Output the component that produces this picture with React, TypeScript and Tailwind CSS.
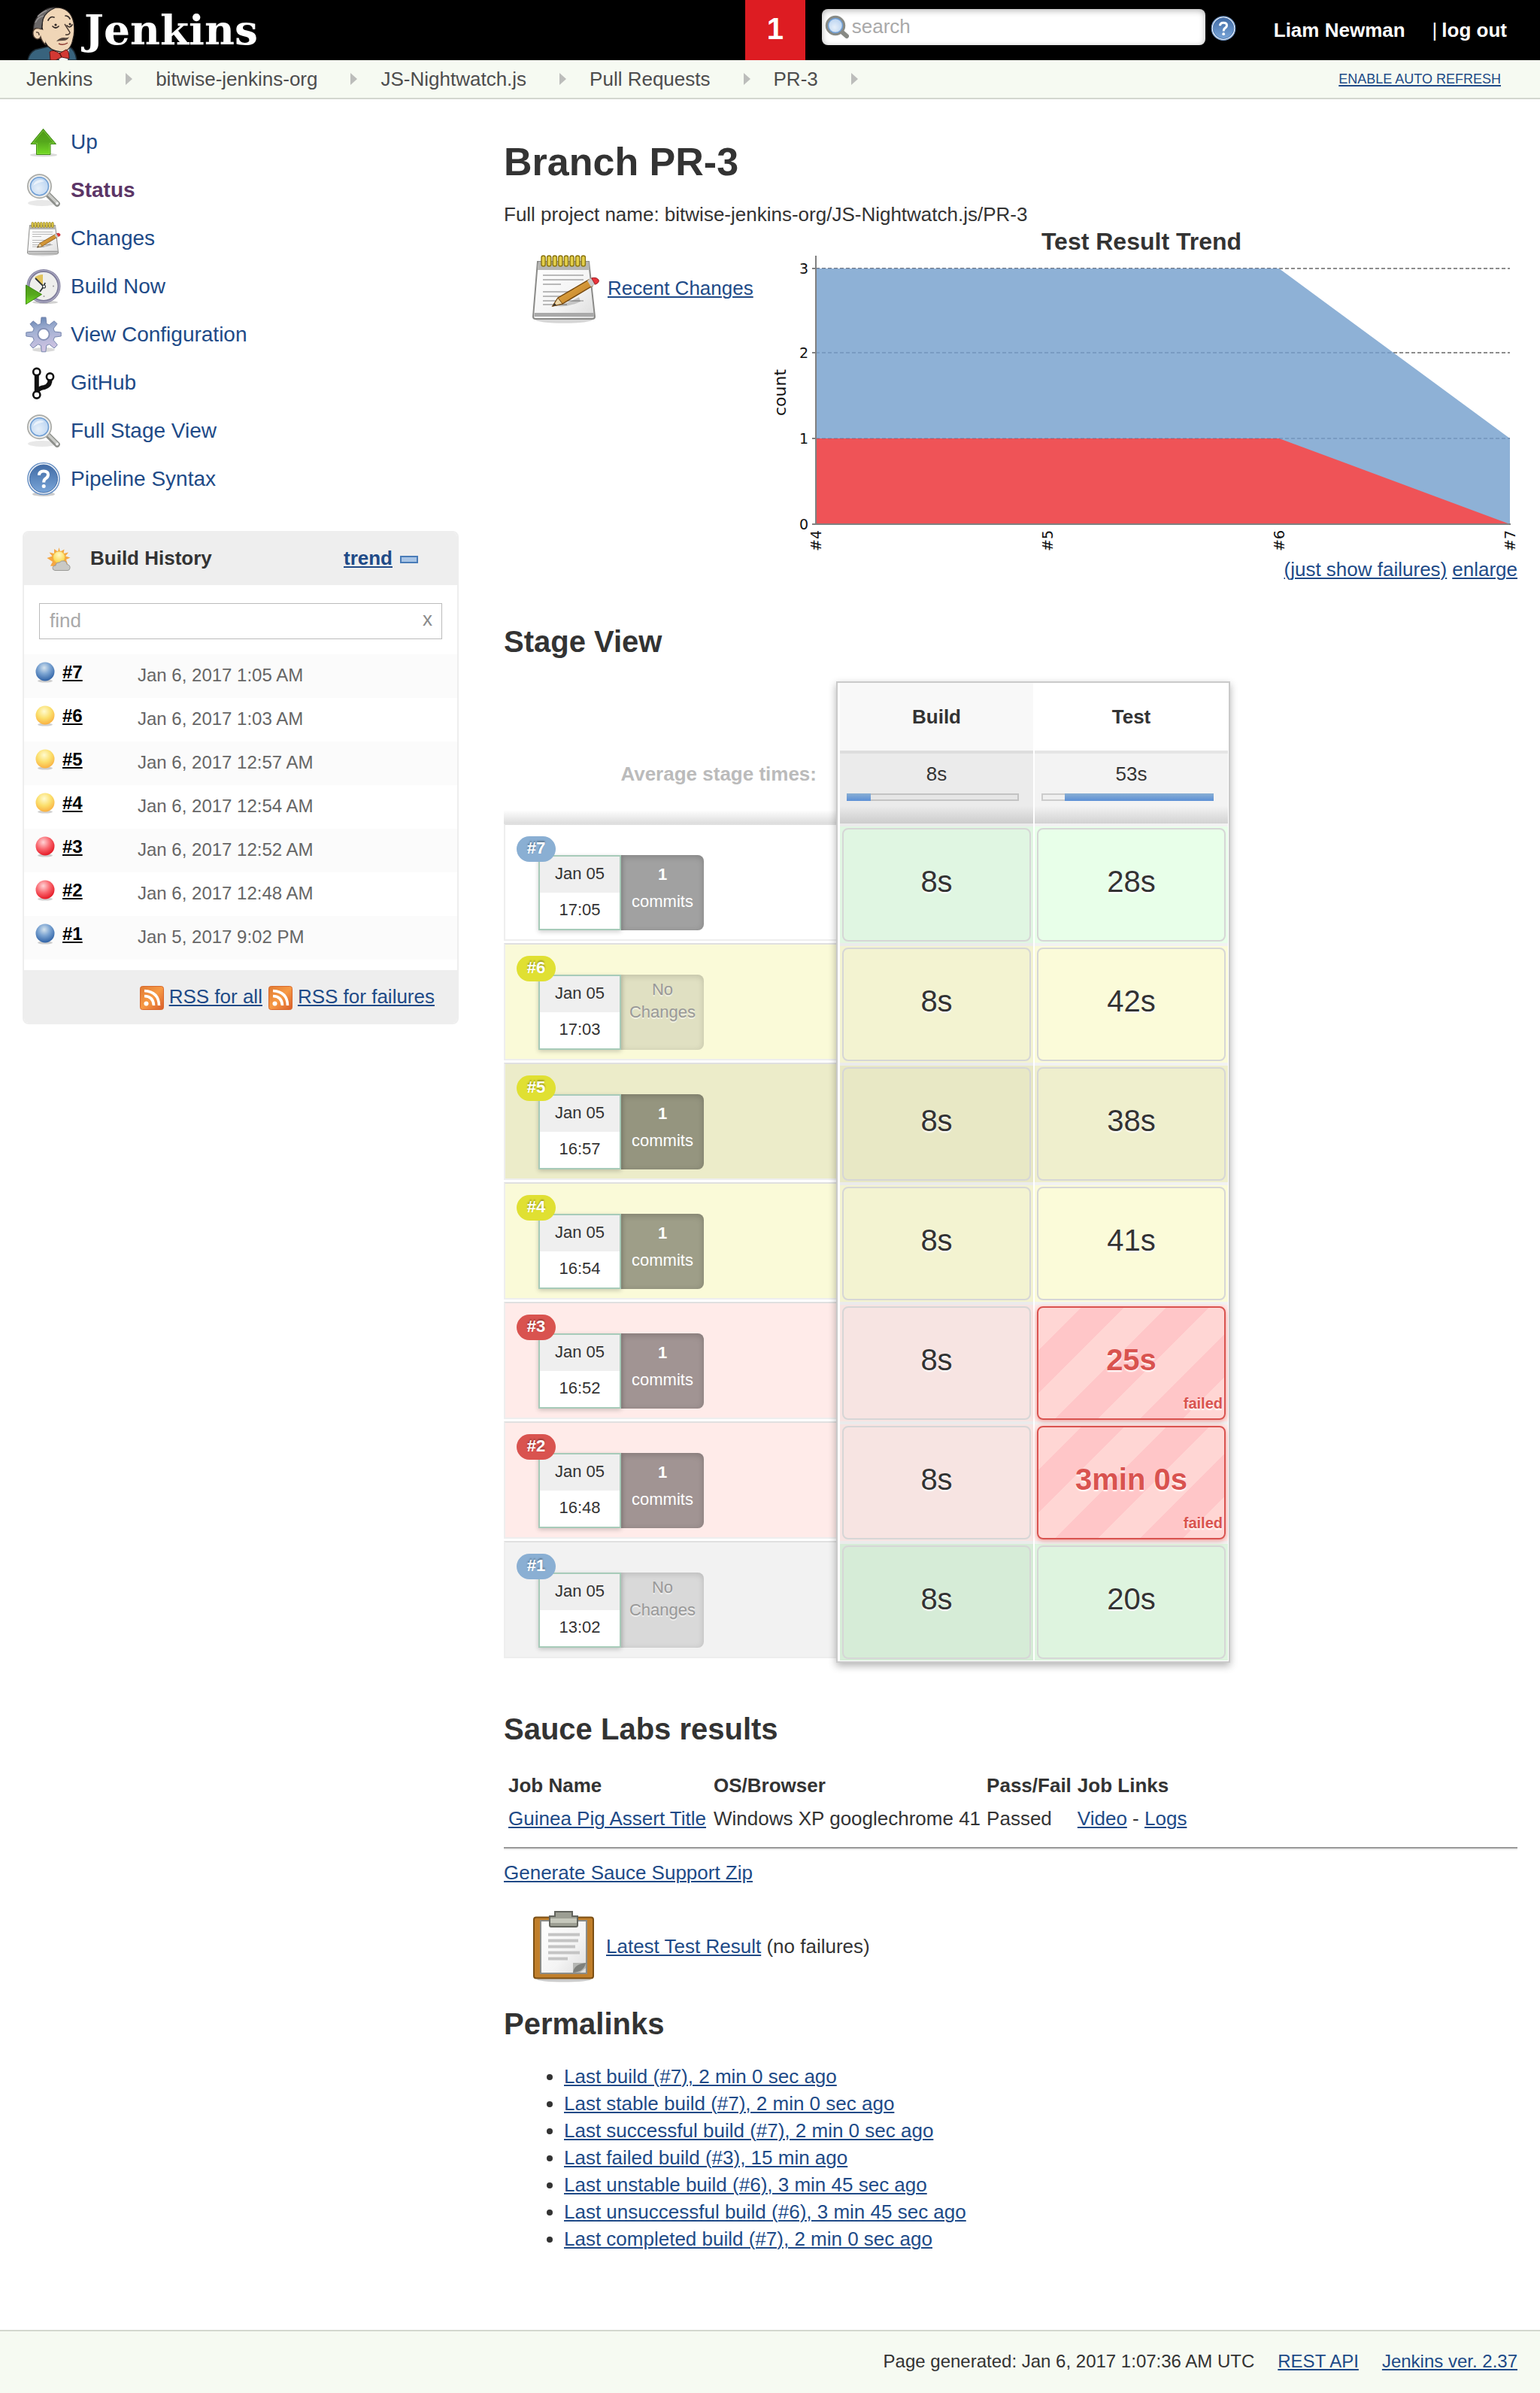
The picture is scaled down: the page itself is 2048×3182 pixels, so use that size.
import type { ReactNode } from "react";

const link = "text-[#204a87] underline decoration-2 underline-offset-2";

/* ---------- shared gradients ---------- */

function Gradients() {
  return (
    <svg className="absolute h-0 w-0" aria-hidden="true">
      <defs>
        <linearGradient id="green" x1="0" y1="0" x2="0" y2="1">
          <stop offset="0" stopColor="#4e9a16" />
          <stop offset="0.5" stopColor="#55a81c" />
          <stop offset="1" stopColor="#75dc25" />
        </linearGradient>
        <radialGradient id="lens" cx="0.45" cy="0.6" r="0.6">
          <stop offset="0" stopColor="#e6eff9" />
          <stop offset="1" stopColor="#b4d0f0" />
        </radialGradient>
        <linearGradient id="paper" x1="0" y1="0" x2="1" y2="1">
          <stop offset="0" stopColor="#ffffff" />
          <stop offset="0.6" stopColor="#f4f4f4" />
          <stop offset="1" stopColor="#dcdcdc" />
        </linearGradient>
        <linearGradient id="gear" x1="0" y1="0" x2="0.2" y2="1">
          <stop offset="0" stopColor="#5f7fae" />
          <stop offset="0.45" stopColor="#a3b1d3" />
          <stop offset="1" stopColor="#cfc3e2" />
        </linearGradient>
        <linearGradient id="help" x1="0" y1="0" x2="0" y2="1">
          <stop offset="0" stopColor="#416ba5" />
          <stop offset="1" stopColor="#79a5d8" />
        </linearGradient>
        <linearGradient id="rss" x1="0" y1="0" x2="1" y2="1">
          <stop offset="0" stopColor="#e07a32" />
          <stop offset="0.5" stopColor="#f79a45" />
          <stop offset="1" stopColor="#d85c2b" />
        </linearGradient>
        <radialGradient id="sun" cx="0.5" cy="0.3" r="0.7">
          <stop offset="0" stopColor="#fff9c4" />
          <stop offset="1" stopColor="#fbd23c" />
        </radialGradient>
        <radialGradient id="ball-blue" cx="0.45" cy="0.3" r="0.7">
          <stop offset="0" stopColor="#d6e4ee" />
          <stop offset="0.45" stopColor="#7ea6d3" />
          <stop offset="1" stopColor="#2f62a6" />
        </radialGradient>
        <radialGradient id="ball-yellow" cx="0.45" cy="0.3" r="0.75">
          <stop offset="0" stopColor="#fffbd0" />
          <stop offset="0.5" stopColor="#fbdf6c" />
          <stop offset="1" stopColor="#f9a93a" />
        </radialGradient>
        <radialGradient id="ball-red" cx="0.4" cy="0.3" r="0.75">
          <stop offset="0" stopColor="#ffd3d6" />
          <stop offset="0.5" stopColor="#f9656d" />
          <stop offset="1" stopColor="#e2101c" />
        </radialGradient>
        <linearGradient id="pencil" x1="0" y1="0" x2="1" y2="1">
          <stop offset="0" stopColor="#edb64c" />
          <stop offset="1" stopColor="#b97622" />
        </linearGradient>
      </defs>
    </svg>
  );
}

/* ---------- icons ---------- */

function Butler() {
  return (
    <svg viewBox="0 0 68 72" className="h-[72px] w-[68px] shrink-0" aria-hidden="true">
      <path d="M1 72 Q3 62 11 58 L28 54 L56 54 Q64 58 66 72Z" fill="#38637d" stroke="#1d2b35" strokeWidth="1.5" />
      <path d="M37 54 L43 72 L54 72 L56 56Z" fill="#f4f4f4" />
      <path d="M20 28 Q20 4 38 2 Q58 2 62 22 Q64 34 61 44 Q58 60 46 61 Q30 60 24 48Z" fill="#f0d6b7" stroke="#2a2320" strokeWidth="1.2" />
      <path d="M9 38 Q6 18 20 8 Q28 1 38 2 Q24 8 21 18 L19 31 L13 33Z" fill="#6b6868" stroke="#2b2828" strokeWidth="1.2" />
      <path d="M14 14 Q20 8 26 6 M11 22 Q14 15 22 13" fill="none" stroke="#9a9797" strokeWidth="1.5" />
      <path d="M19 31 Q10 27 8 34 Q7 42 13 44 Q18 44 18 42 Q20 48 24 50 L26 34Z" fill="#f0d6b7" />
      <path d="M19 31 Q10 27 8 34 Q7 42 13 44 Q17 44 18 41 Q20 48 25 52 M12 35 Q16 34 16 39" fill="none" stroke="#4a3a30" strokeWidth="1.3" />
      <path d="M28 19 Q31 13 36 15 M51 13 Q55 13 57 17 M34 27 Q38 31 42 27 M53 26 Q57 30 60 25" fill="none" stroke="#302724" strokeWidth="1.7" strokeLinecap="round" />
      <circle cx="38" cy="25" r="1.6" fill="#302724" />
      <circle cx="57" cy="24" r="1.5" fill="#302724" />
      <path d="M50 24 L57 35 Q56 39 51 38" fill="none" stroke="#4a3a30" strokeWidth="1.4" />
      <path d="M39 47 Q43 42 49 42 Q54 43 56 41 Q54 46 48 46 Q43 46 39 47Z" fill="#55473f" />
      <path d="M42 50 Q48 53 54 49" fill="none" stroke="#8d3b33" strokeWidth="1.4" />
      <path d="M30 61 Q34 57 43 63 L52 58 Q56 59 56 70 L46 68 L38 72 L31 72Z" fill="#d33833" stroke="#5b1513" strokeWidth="1" />
      <path d="M43 62 L46 68" stroke="#5b1513" strokeWidth="1.5" />
    </svg>
  );
}

function ArrowUp() {
  return (
    <svg viewBox="0 0 48 48" className="size-12 shrink-0" aria-hidden="true">
      <ellipse cx="24" cy="41" rx="18" ry="2.5" fill="#000" opacity="0.14" />
      <path d="M23.5 6.5 L40.5 26.5 H33 V40.5 H14.5 V26.5 H7Z" fill="url(#green)" stroke="#3f8a12" strokeWidth="1" strokeLinejoin="round" />
      <path d="M23.5 8.5 L38 25.5 H32 V39.5 H15.5 V25.5 H9.5Z" fill="none" stroke="#9be05a" strokeWidth="0.8" opacity="0.7" />
    </svg>
  );
}

function Magnifier() {
  return (
    <svg viewBox="0 0 48 48" className="size-12 shrink-0" aria-hidden="true">
      <ellipse cx="22" cy="41" rx="19" ry="4" fill="#000" opacity="0.09" />
      <path d="M29 29 L42 42" stroke="#8c8e8a" strokeWidth="7.5" strokeLinecap="round" />
      <path d="M30 29 L42 41" stroke="#c9cac7" strokeWidth="3.5" strokeLinecap="round" />
      <circle cx="42" cy="41.5" r="2" fill="#eee" />
      <circle cx="18.5" cy="18.7" r="15" fill="url(#lens)" stroke="#a9aaa6" strokeWidth="3" />
      <circle cx="18.5" cy="18.7" r="13.6" fill="none" stroke="#eeeeec" strokeWidth="2.4" />
      <circle cx="18.5" cy="18.7" r="12" fill="none" stroke="#6f9ed4" strokeWidth="1.6" />
      <path d="M10 18 Q12 11 19 10 Q23 10 25 12 Q15 14 10 18Z" fill="#fff" opacity="0.6" />
    </svg>
  );
}

function Notepad({ className = "size-12" }: { className?: string }) {
  return (
    <svg viewBox="0 0 48 48" className={`${className} shrink-0`} aria-hidden="true">
      <ellipse cx="23" cy="45" rx="19" ry="2.4" fill="#000" opacity="0.16" />
      <path d="M5.5 6.5 H39.5 L43.5 43 Q43.5 44.5 42 44.5 H4 Q2.5 44.5 2.5 43Z" fill="url(#paper)" stroke="#8a8a88" strokeWidth="1" />
      <path d="M6 6.5 H39.5 L40 12 H5.5Z" fill="#b6b6b3" />
      <path d="M3.4 40.5 H42.8 L43 43 H3.2Z" fill="#a9a9a9" />
      <path d="M9 15.5 H36 M9 18.5 H36 M9 21.5 H21 M9 26.5 H30 M9 29.5 H27 M9 32.5 H36 M9 35 H25" stroke="#b9b9b9" strokeWidth="1.1" />
      {[8, 11.8, 15.6, 19.4, 23.2, 27, 30.8, 34.6].map((x) => (
        <rect key={x} x={x} y="2.5" width="2.6" height="7" rx="1.3" fill="#e3cf4a" stroke="#8a7410" strokeWidth="0.7" />
      ))}
      <path d="M17 36 Q26 34 33 30 L34 33 Q26 37 17 36Z" fill="#000" opacity="0.18" />
      <path d="M15.5 36 L19 30.5 L39.5 18.5 L42 22.5 L22 34.5Z" fill="url(#pencil)" stroke="#75480f" strokeWidth="0.7" />
      <path d="M15.5 36 L19 30.5 L22 34.5Z" fill="#ecd6a8" stroke="#75480f" strokeWidth="0.5" />
      <path d="M15.5 36 L16.8 34 L18 35.4Z" fill="#333" />
      <path d="M38.5 19 L41.3 17.4 L43.7 21.6 L41 23.2Z" fill="#c9c9c9" />
      <path d="M41.3 17.4 Q44.5 16.5 46 18.5 Q46.8 20.5 43.7 21.6Z" fill="#e8333b" stroke="#9b2226" strokeWidth="0.5" />
    </svg>
  );
}

function ClockPlay() {
  return (
    <svg viewBox="0 0 48 48" className="size-12 shrink-0" aria-hidden="true">
      <ellipse cx="26" cy="45" rx="17" ry="2.2" fill="#000" opacity="0.18" />
      <circle cx="24" cy="23.5" r="20.5" fill="#efefed" stroke="#807e9c" strokeWidth="4" />
      <circle cx="24" cy="23.5" r="21" fill="none" stroke="#b3b1c9" strokeWidth="1.2" />
      <path d="M23 23 L12 12 Q17 8 23 8Z" fill="#e1c35c" />
      <path d="M13 13 L24 24 L26 19 M24 24 L19 31" fill="none" stroke="#2e3436" strokeWidth="1.8" />
      <circle cx="24.5" cy="24" r="2" fill="#fff" stroke="#2e3436" strokeWidth="1.1" />
      <circle cx="37" cy="23.5" r="1" fill="#999" />
      <circle cx="24.5" cy="37" r="1" fill="#999" />
      <path d="M0.5 22 L21.5 34.5 L0.5 47.5Z" fill="url(#green)" stroke="#3f8a12" strokeWidth="1" />
    </svg>
  );
}

function Gear() {
  return (
    <svg viewBox="0 0 48 48" className="size-12 shrink-0" aria-hidden="true">
      <ellipse cx="24" cy="44" rx="15" ry="3" fill="#000" opacity="0.15" />
      <mask id="gear-hole">
        <rect width="48" height="48" fill="#fff" />
        <circle cx="24" cy="23.5" r="6.5" fill="#000" />
      </mask>
      <g mask="url(#gear-hole)">
        <path
          d="M21 1 H27 L27.8 9.5 L31.5 11 L38 5.8 L42 9.5 L37 16 L38.6 20 L47.2 21 V26 L38.6 27.2 L37 31.2 L42.4 37.6 L38 42 L31.6 36.8 L27.8 38.4 L26.8 46.8 H21.4 L20.4 38.4 L16.6 36.8 L10 42 L6 37.8 L11.2 31.2 L9.6 27.2 L0.8 26 V21 L9.6 20 L11.2 16 L6 9.8 L10 5.8 L16.6 11 L20.2 9.5Z"
          fill="url(#gear)"
          stroke="#7585ad"
          strokeWidth="1"
          strokeLinejoin="round"
        />
        <circle cx="24" cy="23.5" r="7.6" fill="none" stroke="#8490b4" strokeWidth="1.6" />
      </g>
    </svg>
  );
}

function GitFork() {
  return (
    <svg viewBox="0 0 48 48" className="size-12 shrink-0" aria-hidden="true">
      <path d="M14.8 14 V36" stroke="#111" strokeWidth="6" />
      <path d="M32.5 20 Q32.5 28 25 30 Q18 31 15.5 35" fill="none" stroke="#111" strokeWidth="6" />
      <circle cx="14.8" cy="9.5" r="4.6" fill="#fff" stroke="#111" strokeWidth="2.6" />
      <circle cx="32.5" cy="16" r="4.6" fill="#fff" stroke="#111" strokeWidth="2.6" />
      <circle cx="14.8" cy="40" r="4.6" fill="#fff" stroke="#111" strokeWidth="2.6" />
    </svg>
  );
}

function Help({ className = "size-12" }: { className?: string }) {
  return (
    <svg viewBox="0 0 48 48" className={`${className} shrink-0`} aria-hidden="true">
      <ellipse cx="24" cy="44" rx="15" ry="3" fill="#000" opacity="0.2" />
      <circle cx="24" cy="23.5" r="21" fill="#fff" stroke="#6d94c6" strokeWidth="1.6" />
      <circle cx="24" cy="23.5" r="18.5" fill="url(#help)" stroke="#3c69a6" strokeWidth="1" />
      <path d="M18 19 Q18 13.5 24 13.5 Q30 13.5 30 18 Q30 21.5 26.5 23.5 Q24.2 25 24.2 28.5" fill="none" stroke="#fff" strokeWidth="4" />
      <circle cx="24.2" cy="33.5" r="2.5" fill="#fff" />
    </svg>
  );
}

function Weather() {
  return (
    <svg viewBox="0 0 32 32" className="size-8 shrink-0" aria-hidden="true">
      <path
        d="M16.5 0 L18 5.5 L23.5 2.5 L22.5 8 L29 6.5 L25 11.5 L31.5 13.5 L26 16 L28 22 L20 20 L10 25 L5 24.5 L8 19 L0.5 14 L7.5 11.5 L3.5 6.5 L10 8 L10 2 L15 5.5Z"
        fill="#f5a742"
      />
      <circle cx="16.5" cy="13" r="8" fill="url(#sun)" stroke="#f0b43a" strokeWidth="0.8" />
      <path d="M11 30.5 Q7.5 30 8 26.5 Q9 23.5 12 24 Q12.5 19.5 17 20 Q19.5 17 23.5 18 Q27 19 27 22.5 Q31.5 23 31 27.5 Q30.5 30.5 28 30.5Z" fill="#c9c9c6" stroke="#9a9a97" strokeWidth="1" />
    </svg>
  );
}

function Rss() {
  return (
    <svg viewBox="0 0 32 32" className="size-8 shrink-0" aria-hidden="true">
      <rect x="0.5" y="0.5" width="31" height="31" rx="3" fill="url(#rss)" stroke="#d9692c" />
      <circle cx="8.5" cy="23.5" r="3" fill="#fff" />
      <path d="M6 13.5 Q18 14 18.5 26 M6 6.5 Q25 7.5 25.5 26" fill="none" stroke="#fff" strokeWidth="3.6" />
    </svg>
  );
}

function Ball({ fill }: { fill: string }) {
  return (
    <svg viewBox="0 0 26 28" className="h-7 w-[26px] shrink-0" aria-hidden="true">
      <ellipse cx="13" cy="25.5" rx="10" ry="2" fill="#000" opacity="0.18" />
      <circle cx="13" cy="13" r="12.5" fill={fill} />
    </svg>
  );
}

function Clipboard() {
  return (
    <svg viewBox="0 0 96 96" className="size-24 shrink-0" aria-hidden="true">
      <ellipse cx="48" cy="92" rx="36" ry="3.5" fill="#000" opacity="0.2" />
      <rect x="8" y="9.5" width="79" height="81" rx="3" fill="#c17f2b" stroke="#7c4f13" strokeWidth="2" />
      <path d="M17 14 H78 V84 H17Z" fill="url(#paper)" stroke="#8b8c88" strokeWidth="2" />
      <path d="M27 32.5 H69 M27 40.5 H67 M27 48.5 H63 M27 56.5 H69 M27 64.5 H53" stroke="#c4c4c4" strokeWidth="4" />
      <path d="M60 83 V70 H77 V77 L69 83Z" fill="#b5b6b3" />
      <path d="M60 83 Q61 72 77 70 Q75 82 60 83Z" fill="#7e807c" />
      <path d="M36 2 H59 V8 H66 V20 Q66 22 64 22 H31 Q29 22 29 20 V8 H36Z" fill="#9c9e93" stroke="#62645d" strokeWidth="2" />
      <path d="M30 11 H65 V17 H30Z" fill="#c6c8bc" />
    </svg>
  );
}

/* ---------- header ---------- */

function Header() {
  return (
    <header className="flex h-20 items-center bg-black pr-11 text-[26px] leading-8 font-bold text-white">
      <a href="#home" className="flex items-center self-end pl-9">
        <Butler />
        <span className="pb-2 pl-2 font-['DejaVu_Serif',serif] text-[55px] leading-[64px]">Jenkins</span>
      </a>
      <div className="ml-auto flex items-center">
        <button type="button" className="flex size-20 items-center justify-center bg-[#dd1c22] pb-1 text-[40px]">
          1
        </button>
        <label className="mb-2 ml-[22px] flex h-12 w-[510px] items-center rounded-lg bg-white px-1 shadow-[inset_0_2px_8px_rgba(0,0,0,0.3)]">
          <svg viewBox="0 0 32 32" className="size-8 shrink-0" aria-hidden="true">
            <path d="M21 21 L29 28" stroke="#888a85" strokeWidth="6" strokeLinecap="round" />
            <circle cx="14" cy="14" r="11.5" fill="url(#lens)" stroke="#888a85" strokeWidth="3.5" />
            <circle cx="14" cy="14" r="9.5" fill="none" stroke="#6f9ed4" strokeWidth="1.5" />
          </svg>
          <span className="sr-only">Search</span>
          <input type="text" placeholder="search" className="h-10 min-w-0 flex-1 bg-transparent pb-0.5 pl-1 font-normal text-black outline-none placeholder:text-[#a9a9a9]" />
        </label>
        <a href="#help" aria-label="Help" className="mb-1 ml-1.5">
          <Help className="size-9" />
        </a>
        <a href="#user" className="ml-[49px]">
          Liam Newman
        </a>
        <span className="ml-9 font-normal">|</span>
        <a href="#logout" className="ml-1.5">
          log out
        </a>
      </div>
    </header>
  );
}

const crumbs = ["Jenkins", "bitwise-jenkins-org", "JS-Nightwatch.js", "Pull Requests", "PR-3"];

function Breadcrumbs() {
  return (
    <nav aria-label="Breadcrumb" className="flex h-[52px] items-center border-b-2 border-[#d3d7cf] bg-[#f6faf2] pr-[52px] pl-[35px] text-[26px] leading-8">
      {crumbs.map((c) => (
        <span key={c} className="flex items-center">
          <a href="#crumb" className="text-[#4d4d4d]">
            {c}
          </a>
          <svg viewBox="0 0 9 16" className="mr-[31px] ml-11 h-4 w-[9px]" aria-hidden="true">
            <path d="M0 0 L9 8 L0 16Z" fill="#bcbdbb" />
          </svg>
        </span>
      ))}
      <a href="#refresh" className="ml-auto text-[18px] text-[#204a87] underline decoration-2 underline-offset-2">
        ENABLE AUTO REFRESH
      </a>
    </nav>
  );
}

/* ---------- side panel ---------- */

const tasks: { label: string; icon: ReactNode; current?: boolean }[] = [
  { label: "Up", icon: <ArrowUp /> },
  { label: "Status", icon: <Magnifier />, current: true },
  { label: "Changes", icon: <Notepad /> },
  { label: "Build Now", icon: <ClockPlay /> },
  { label: "View Configuration", icon: <Gear /> },
  { label: "GitHub", icon: <GitFork /> },
  { label: "Full Stage View", icon: <Magnifier /> },
  { label: "Pipeline Syntax", icon: <Help /> },
];

const history = [
  { id: "#7", date: "Jan 6, 2017 1:05 AM", ball: "url(#ball-blue)" },
  { id: "#6", date: "Jan 6, 2017 1:03 AM", ball: "url(#ball-yellow)" },
  { id: "#5", date: "Jan 6, 2017 12:57 AM", ball: "url(#ball-yellow)" },
  { id: "#4", date: "Jan 6, 2017 12:54 AM", ball: "url(#ball-yellow)" },
  { id: "#3", date: "Jan 6, 2017 12:52 AM", ball: "url(#ball-red)" },
  { id: "#2", date: "Jan 6, 2017 12:48 AM", ball: "url(#ball-red)" },
  { id: "#1", date: "Jan 5, 2017 9:02 PM", ball: "url(#ball-blue)" },
];

function SidePanel() {
  return (
    <aside className="ml-[30px] w-[580px] shrink-0 pt-[25px]">
      <ul>
        {tasks.map((t) => (
          <li key={t.label} className="flex h-16 items-center gap-3 pl-1 text-[28px] leading-8">
            {t.icon}
            <a href="#task" className={t.current ? "font-bold text-[#5c3566]" : "text-[#204a87]"}>
              {t.label}
            </a>
          </li>
        ))}
      </ul>

      <section className="mt-[37px] overflow-hidden rounded-lg border-2 border-[#eeeeee] text-[26px] leading-8">
        <div className="flex h-[70px] items-center bg-[#eeeeee] pr-[52px] pb-0.5 pl-[30px] font-bold">
          <span className="pt-1">
            <Weather />
          </span>
          <h2 className="ml-[26px]">Build History</h2>
          <a href="#trend" className={`ml-auto ${link}`}>
            trend
          </a>
          <button type="button" aria-label="Collapse" className="mt-1 ml-2.5 h-2.5 w-6 border-2 border-[#4a7cb8] bg-[#a9c5e6]" />
        </div>
        <label className="mx-5 mt-6 flex h-12 items-center border border-[#bbbbbb] pr-3 pl-[13px]">
          <span className="sr-only">Find builds</span>
          <input type="text" placeholder="find" className="h-10 min-w-0 flex-1 pb-0.5 outline-none placeholder:text-[#a9a9a9]" />
          <button type="button" aria-label="Clear" className="pb-1.5 text-[#8a8a8a]">
            x
          </button>
        </label>
        <table className="mt-5 w-full border-collapse text-[24px] leading-8">
          <tbody>
            {history.map((b) => (
              <tr key={b.id} className="h-[58px] odd:bg-[#fbfbfb]">
                <td className="w-[151px] pb-2.5 pl-[15px]">
                  <span className="flex items-center gap-2.5">
                    <Ball fill={b.ball} />
                    <a href="#build" className="font-bold text-black underline decoration-2 underline-offset-2">
                      {b.id}
                    </a>
                  </span>
                </td>
                <td className="pb-0.5 text-[#666666]">
                  <a href="#build">{b.date}</a>
                </td>
              </tr>
            ))}
          </tbody>
        </table>
        <div className="mt-3.5 flex h-[70px] items-center justify-end bg-[#eeeeee] pr-[30px]">
          <span className="pt-1">
            <Rss />
          </span>
          <a href="#rss-all" className={`ml-[7px] ${link}`}>
            RSS for all
          </a>
          <span className="pt-1 pl-2">
            <Rss />
          </span>
          <a href="#rss-failures" className={`ml-[7px] ${link}`}>
            RSS for failures
          </a>
        </div>
      </section>
    </aside>
  );
}

/* ---------- test trend ---------- */

function TrendChart() {
  const xs = [67, 375, 683, 990];
  const ys = [358, 244, 130, 18];
  return (
    <svg viewBox="0 0 1000 400" className="block h-[400px] w-full font-['DejaVu_Sans',sans-serif] text-[19px]" role="img" aria-label="Test Result Trend">
      {ys.slice(1).map((y) => (
        <path key={y} d={`M67 ${y} H990`} stroke="#8c8c8c" strokeWidth="2" strokeDasharray="5 3" />
      ))}
      <path d="M67 18 H683 L990 244 V358 H67Z" fill="#8eb1d6" />
      <path d="M67 244 H683 L990 358 H67Z" fill="#ef5357" />
      {ys.slice(1).map((y) => (
        <path key={y} d={`M67 ${y} H${y === 18 ? 683 : y === 130 ? 836 : 990}`} stroke="#305080" strokeWidth="2" strokeDasharray="5 3" opacity="0.22" />
      ))}
      <path d="M67 1 V358 M62 358 H991 M62 244 H67 M62 130 H67 M62 18 H67" stroke="#808080" strokeWidth="2" fill="none" />
      {ys.map((y, i) => (
        <text key={y} x="57" y={y + 7} textAnchor="end" fill="#111">
          {i}
        </text>
      ))}
      {xs.map((x, i) => (
        <text key={x} transform={`translate(${x + 7} 366) rotate(-90)`} textAnchor="end" fill="#111">
          {`#${i + 4}`}
        </text>
      ))}
      <text transform="translate(27 183) rotate(-90)" textAnchor="middle" className="text-[22px]" fill="#111">
        count
      </text>
    </svg>
  );
}

/* ---------- stage view ---------- */

type Tone = { row: string; build: string; test: string };

const tones: Record<string, Tone> = {
  white: { row: "bg-white", build: "bg-[#e0f6e2]", test: "bg-[#e8ffe9]" },
  yellow: { row: "bg-[#fafad8]", build: "bg-[#f3f3d1]", test: "bg-[#fbfbd9]" },
  olive: { row: "bg-[#ececc9]", build: "bg-[#e8e8c5]", test: "bg-[#efefcd]" },
  red: { row: "bg-[#ffebe9]", build: "bg-[#f7e4e2]", test: "bg-[#ffebe9]" },
  gray: { row: "bg-[#f2f2f2]", build: "bg-[#d6ecd7]", test: "bg-[#def4df]" },
};

const badges = { blue: "bg-[#8aafd3]", yellow: "bg-[#e0e032]", red: "bg-[#d9534f]" };

const runs: { id: string; time: string; commits: boolean; tone: string; badge: keyof typeof badges; test: string; failed?: boolean }[] = [
  { id: "#7", time: "17:05", commits: true, tone: "white", badge: "blue", test: "28s" },
  { id: "#6", time: "17:03", commits: false, tone: "yellow", badge: "yellow", test: "42s" },
  { id: "#5", time: "16:57", commits: true, tone: "olive", badge: "yellow", test: "38s" },
  { id: "#4", time: "16:54", commits: true, tone: "yellow", badge: "yellow", test: "41s" },
  { id: "#3", time: "16:52", commits: true, tone: "red", badge: "red", test: "25s", failed: true },
  { id: "#2", time: "16:48", commits: true, tone: "red", badge: "red", test: "3min 0s", failed: true },
  { id: "#1", time: "13:02", commits: false, tone: "gray", badge: "blue", test: "20s" },
];

function StageCell({ text, bg, sep, failed }: { text: string; bg: string; sep: string; failed?: boolean }) {
  return (
    <div className={`border-t-4 px-[3px] py-0.5 ${bg} ${sep}`}>
      {failed ? (
        <div className="relative flex h-[151px] items-center justify-center rounded-lg border-2 border-[#d9534f] bg-[repeating-linear-gradient(135deg,#ffd6d4_0px,#ffd6d4_40px,#ffc6c8_40px,#ffc6c8_80px)] text-[40px] leading-[48px] font-bold text-[#d9534f] shadow-[0_2px_6px_rgba(217,83,79,0.5)] text-shadow-[0_2px_2px_#ffffff]">
          <span className="pb-2.5">{text}</span>
          <span className="absolute right-0.5 bottom-1.5 text-[20px] leading-7">failed</span>
        </div>
      ) : (
        <div className="flex h-[151px] items-center justify-center rounded-lg border-2 border-[#d6d6d6] text-[40px] leading-[48px] text-shadow-[0_2px_2px_#ffffff]">
          <span className="pb-2.5">{text}</span>
        </div>
      )}
    </div>
  );
}

function StageView() {
  return (
    <div className="relative mt-[29px] w-[966px] pt-0.5 pb-[3px]">
      <table className="w-full table-fixed border-collapse">
        <colgroup>
          <col className="w-[444px]" />
          <col className="w-[260px]" />
          <col className="w-[262px]" />
        </colgroup>
        <thead className="text-[26px] leading-8">
          <tr>
            <td />
            <th scope="col" className="p-0 pl-[3px]">
              <div className="flex h-[94px] items-center justify-center border-b-4 border-[#dddddd] bg-[#f8f8f8]">Build</div>
            </th>
            <th scope="col" className="p-0 pr-[3px] pl-0.5">
              <div className="flex h-[94px] items-center justify-center border-b-4 border-[#e5e5e5]">Test</div>
            </th>
          </tr>
          <tr>
            <th scope="row" className="p-0">
              <div className="mr-0.5 flex h-[93px] flex-col justify-between pt-[11px] text-right text-[#bbbbbb]">
                <span className="pr-[26px]">Average stage times:</span>
                <span className="h-[18px] bg-linear-to-b from-white to-[#dddddd]" />
              </div>
            </th>
            <td className="p-0 pl-[3px]">
              <div className="flex h-[93px] flex-col bg-[linear-gradient(#ebebeb_75%,#cccccc)] pt-[11px]">
                <span className="text-center">8s</span>
                <span className="mt-2.5 mr-[19px] ml-[9px] flex h-2.5 border-2 border-black/15 bg-[#e6e6e6]">
                  <span className="-m-0.5 w-8 bg-linear-to-b from-[#8aafd3] to-[#5b8fd6]" />
                </span>
              </div>
            </td>
            <td className="p-0 pr-[3px] pl-0.5">
              <div className="flex h-[93px] flex-col bg-[linear-gradient(#f3f3f3_75%,#d2d2d2)] pt-[11px]">
                <span className="text-center">53s</span>
                <span className="mt-2.5 mr-[19px] ml-[9px] flex h-2.5 justify-end border-2 border-black/15 bg-[#f0f0f0]">
                  <span className="-m-0.5 w-[198px] bg-linear-to-b from-[#8aafd3] to-[#5b8fd6]" />
                </span>
              </div>
            </td>
          </tr>
        </thead>
        <tbody>
          {runs.map((r) => {
            const tone = tones[r.tone];
            return (
              <tr key={r.id}>
                <th scope="row" className="p-0 pb-[3px] text-left font-normal">
                  <div className={`relative mr-0.5 h-[156px] border-2 border-r-0 border-[#eeeeee] border-t-[#e0e0e0] pt-10 pl-11 ${tone.row}`}>
                    <div className="flex h-[100px] w-[220px] text-center text-[22px]">
                      <div className="w-[110px] border-2 border-[#a7cbb9] bg-white leading-[46px] shadow-[0_2px_6px_rgba(0,0,0,0.2)]">
                        <div className="h-12 bg-[#efefef]">Jan 05</div>
                        <div className="h-12">{r.time}</div>
                      </div>
                      {r.commits ? (
                        <div className="flex-1 rounded-r-lg bg-black/37 pt-2 leading-9 text-white shadow-[inset_0_2px_8px_rgba(0,0,0,0.2)]">
                          <div className="font-bold">1</div>
                          <div>commits</div>
                        </div>
                      ) : (
                        <div className="flex-1 rounded-r-lg bg-black/10 pt-[5px] leading-[30px] text-[#999999] shadow-[inset_0_2px_8px_rgba(0,0,0,0.15)] text-shadow-[0_2px_1px_rgba(255,255,255,0.6)]">
                          No
                          <br />
                          Changes
                        </div>
                      )}
                    </div>
                    <a href="#run" className={`absolute top-[15px] left-[15px] flex h-[34px] w-[52px] items-center justify-center rounded-full pb-0.5 text-[22px] font-bold text-white text-shadow-[0_-2px_2px_rgba(0,0,0,0.3)] ${badges[r.badge]}`}>
                      {r.id}
                    </a>
                  </div>
                </th>
                <td className="p-0 pl-[3px]">
                  <StageCell text="8s" bg={tone.build} sep="border-[#ebebeb]" />
                </td>
                <td className="p-0 pr-[3px] pl-0.5">
                  <StageCell text={r.test} bg={tone.test} sep="border-[#f2f2f2]" failed={r.failed} />
                </td>
              </tr>
            );
          })}
        </tbody>
      </table>
      <div className="pointer-events-none absolute inset-y-0 right-0 w-[524px] border-2 border-[#cacaca] shadow-[0_4px_10px_rgba(0,0,0,0.3)]" />
    </div>
  );
}

/* ---------- page ---------- */

const permalinks = [
  "Last build (#7), 2 min 0 sec ago",
  "Last stable build (#7), 2 min 0 sec ago",
  "Last successful build (#7), 2 min 0 sec ago",
  "Last failed build (#3), 15 min ago",
  "Last unstable build (#6), 3 min 45 sec ago",
  "Last unsuccessful build (#6), 3 min 45 sec ago",
  "Last completed build (#7), 2 min 0 sec ago",
];

export default function App() {
  return (
    <div className="bg-white font-['Liberation_Sans',Arial,sans-serif] text-[#333333]">
      <Gradients />
      <Header />
      <Breadcrumbs />
      <div className="flex">
        <SidePanel />
        <main className="mr-[30px] ml-[60px] min-w-0 flex-1 pt-[53px] text-[26px] leading-8">
          <h1 className="text-[52px] leading-[60px] font-bold">Branch PR-3</h1>
          <p className="mt-6">Full project name: bitwise-jenkins-org/JS-Nightwatch.js/PR-3</p>

          <div className="mt-0.5 flex justify-between">
            <div className="flex items-center gap-2 self-start pt-8 pl-[34px]">
              <Notepad className="size-24" />
              <a href="#changes" className={link}>
                Recent Changes
              </a>
            </div>
            <section className="w-[1000px]">
              <h2 className="text-center text-[32px] leading-9 font-bold">Test Result Trend</h2>
              <TrendChart />
              <div className="mt-0.5 flex justify-end gap-[7px]">
                <a href="#failures" className={link}>
                  (just show failures)
                </a>
                <a href="#enlarge" className={link}>
                  enlarge
                </a>
              </div>
            </section>
          </div>

          <h2 className="mt-14 text-[40px] leading-[48px] font-bold">Stage View</h2>
          <StageView />

          <h2 className="mt-16 text-[40px] leading-[48px] font-bold">Sauce Labs results</h2>
          <table className="mt-[29px] ml-0.5 text-left">
            <thead>
              <tr>
                {["Job Name", "OS/Browser", "Pass/Fail", "Job Links"].map((h) => (
                  <th key={h} scope="col" className="px-1 py-1.5">
                    {h}
                  </th>
                ))}
              </tr>
            </thead>
            <tbody>
              <tr>
                <td className="py-1.5 pr-1.5 pl-1">
                  <a href="#job" className={link}>
                    Guinea Pig Assert Title
                  </a>
                </td>
                <td className="px-1 py-1.5">Windows XP googlechrome 41</td>
                <td className="px-1 py-1.5">Passed</td>
                <td className="px-1 py-1.5">
                  <a href="#video" className={link}>
                    Video
                  </a>{" "}
                  -{" "}
                  <a href="#logs" className={link}>
                    Logs
                  </a>
                </td>
              </tr>
            </tbody>
          </table>
          <hr className="mt-4 h-1 border-t-2 border-b-2 border-t-[#999999] border-b-[#eeeeee]" />
          <p className="mt-3.5">
            <a href="#zip" className={link}>
              Generate Sauce Support Zip
            </a>
          </p>
          <div className="mt-[34px] flex items-center gap-2 pl-8">
            <Clipboard />
            <p>
              <a href="#result" className={link}>
                Latest Test Result
              </a>{" "}
              (no failures)
            </p>
          </div>

          <h2 className="mt-[31px] text-[40px] leading-[48px] font-bold">Permalinks</h2>
          <ul className="mt-7 list-disc pl-20 leading-9">
            {permalinks.map((p) => (
              <li key={p}>
                <a href="#permalink" className={link}>
                  {p}
                </a>
              </li>
            ))}
          </ul>
        </main>
      </div>
      <footer className="mt-[103px] flex justify-end gap-[31px] border-t-2 border-[#d3d7cf] bg-[#f6faf2] pt-6 pr-[30px] pb-[26px] text-[24px] leading-8">
        <span>Page generated: Jan 6, 2017 1:07:36 AM UTC</span>
        <a href="#api" className={link}>
          REST API
        </a>
        <a href="#version" className={link}>
          Jenkins ver. 2.37
        </a>
      </footer>
    </div>
  );
}
